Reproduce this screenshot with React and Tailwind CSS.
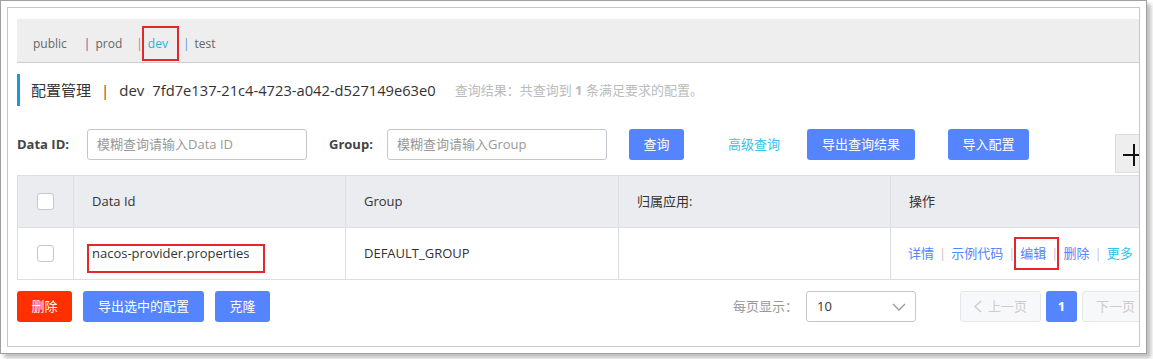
import React from 'react'

const tabs = [
    { name: "public", mr: "mr-[17px]" },
    { name: "prod", pipe: "text-[#8b3a8b]", mr: "mr-[14px]" },
    { name: "dev", pipe: "text-[#b58a4a]", active: true, mr: "mr-[15px]" },
    { name: "test", pipe: "text-[#5b9bd5]", mr: "" },
]

const Checkbox = () => (
    <div className="w-[17px] h-[17px] rounded-[3px] border border-[#c4c6cf] bg-white" />
)

const Sep = () => <span className="mx-[5px] text-[#c4c6cf]">|</span>

const App = () => {
    return (
        <div className="w-[1153px] h-[359px] bg-white font-['Open_Sans','Noto_Sans_CJK_SC',sans-serif] text-[#333]">
            <div className="w-[1147px] h-[354px] border border-[#a0a0a0] p-[6px] bg-white shadow-[4px_4px_4px_rgba(0,0,0,0.25)]">
                <div className="relative h-full border border-[#c8c8c8] overflow-hidden">
                    <div className="w-[1146px] ml-[9px]">
                        {/* namespace tabs */}
                        <div className="mt-[11px] h-[44px] bg-[#eeeeee] border-b border-[#cccccc] flex items-center pt-[6px] pl-[16px] text-[12px] text-[#666]">
                            {tabs.map((t) => (
                                <div key={t.name} className="flex items-center">
                                    {t.pipe && <span className={`mr-[5px] ${t.pipe}`}>|</span>}
                                    <span className={`relative ${t.mr} ${t.active ? "text-[#1bb5e0]" : ""}`}>
                                        {t.name}
                                        {t.active && (
                                            <span className="absolute -left-[6px] -right-[11px] -top-[9px] -bottom-[8px] border-2 border-[#e5262b]" />
                                        )}
                                    </span>
                                </div>
                            ))}
                        </div>

                        {/* title */}
                        <div className="mt-[11px] h-[32px] flex items-center border-l-[3px] border-[#1a9ad6] pl-[11px] pt-[1px]">
                            <span className="text-[15px]">配置管理</span>
                            <span className="mx-[10px] text-[15px] text-[#a52a2a]">|</span>
                            <span className="text-[15px]">dev</span>
                            <span className="ml-[8px] text-[14.7px]">7fd7e137-21c4-4723-a042-d527149e63e0</span>
                            <span className="ml-[19px] text-[13px] text-[#bbbbbb]">
                                查询结果：共查询到 <b>1</b> 条满足要求的配置。
                            </span>
                        </div>

                        {/* search */}
                        <div className="mt-[23px] h-[31px] flex items-center text-[13px]">
                            <span className="font-bold text-[#444] w-[70px]">Data ID:</span>
                            <div className="w-[220px] h-[31px] border border-[#c4c6cf] rounded-[3px] flex items-center pl-[9px] text-[#999]">
                                模糊查询请输入Data ID
                            </div>
                            <span className="ml-[22px] font-bold text-[#444] w-[58px]">Group:</span>
                            <div className="w-[220px] h-[31px] border border-[#c4c6cf] rounded-[3px] flex items-center pl-[9px] text-[#999]">
                                模糊查询请输入Group
                            </div>
                            <button className="ml-[22px] w-[55px] h-[31px] rounded-[3px] bg-[#5584ff] text-white">查询</button>
                            <span className="ml-[44px] text-[#33c3e6]">高级查询</span>
                            <button className="ml-[27px] w-[108px] h-[31px] rounded-[3px] bg-[#5584ff] text-white">导出查询结果</button>
                            <button className="ml-[33px] w-[81px] h-[31px] rounded-[3px] bg-[#5584ff] text-white">导入配置</button>
                        </div>

                        {/* table */}
                        <div className="mt-[15px] border-l border-t border-[#dcdee3] text-[13px]">
                            <div className="grid grid-cols-[56px_272px_273px_272px_273px] h-[52px] bg-[#ebecf0] border-b border-[#dcdee3]">
                                <div className="flex items-center justify-center border-r border-[#dcdee3]"><Checkbox /></div>
                                <div className="flex items-center pl-[18px] border-r border-[#dcdee3]">Data Id</div>
                                <div className="flex items-center pl-[18px] border-r border-[#dcdee3]">Group</div>
                                <div className="flex items-center pl-[18px] border-r border-[#dcdee3]">归属应用:</div>
                                <div className="flex items-center pl-[18px]">操作</div>
                            </div>
                            <div className="grid grid-cols-[56px_272px_273px_272px_273px] h-[52px] bg-white border-b border-[#dcdee3]">
                                <div className="flex items-center justify-center border-r border-[#dcdee3]"><Checkbox /></div>
                                <div className="relative flex items-center pl-[18px] border-r border-[#dcdee3]">
                                    nacos-provider.properties
                                    <span className="absolute left-[13px] top-[16px] w-[178px] h-[29px] border-2 border-[#e5262b]" />
                                </div>
                                <div className="flex items-center pl-[18px] border-r border-[#dcdee3]">DEFAULT_GROUP</div>
                                <div className="border-r border-[#dcdee3]" />
                                <div className="flex items-center pl-[17px] text-[#5584ff]">
                                    <span>详情</span>
                                    <Sep />
                                    <span>示例代码</span>
                                    <Sep />
                                    <span className="relative">
                                        编辑
                                        <span className="absolute -left-[6px] -right-[13px] -top-[7px] -bottom-[7px] border-2 border-[#e5262b]" />
                                    </span>
                                    <Sep />
                                    <span>删除</span>
                                    <Sep />
                                    <span className="text-[#33c3e6]">更多</span>
                                </div>
                            </div>
                        </div>

                        {/* footer */}
                        <div className="mt-[11px] h-[31px] flex items-center text-[13px]">
                            <button className="w-[55px] h-[31px] rounded-[3px] bg-[#ff3000] text-white">删除</button>
                            <button className="ml-[11px] w-[121px] h-[31px] rounded-[3px] bg-[#5584ff] text-white">导出选中的配置</button>
                            <button className="ml-[11px] w-[55px] h-[31px] rounded-[3px] bg-[#5584ff] text-white">克隆</button>
                            <div className="ml-auto flex items-center">
                                <span className="text-[#999]">每页显示：</span>
                                <div className="ml-[8px] w-[110px] h-[31px] border border-[#c4c6cf] rounded-[3px] flex items-center justify-between pl-[10px] pr-[9px]">
                                    <span>10</span>
                                    <svg width="14" height="8" viewBox="0 0 14 8" fill="none" stroke="#999" strokeWidth="1.3">
                                        <polyline points="1,1 7,7 13,1" />
                                    </svg>
                                </div>
                                <div className="ml-[44px] w-[81px] h-[31px] border border-[#e6e7eb] bg-[#f7f8fa] rounded-[3px] flex items-center justify-center gap-[6px] text-[#cccccc]">
                                    <svg width="8" height="13" viewBox="0 0 8 13" fill="none" stroke="#cccccc" strokeWidth="1.5">
                                        <polyline points="7,1 1,6.5 7,12" />
                                    </svg>
                                    <span>上一页</span>
                                </div>
                                <div className="ml-[5px] w-[31px] h-[31px] rounded-[3px] bg-[#5584ff] text-white font-bold flex items-center justify-center">1</div>
                                <div className="ml-[5px] w-[81px] h-[31px] border border-[#e6e7eb] bg-[#f7f8fa] rounded-[3px] flex items-center justify-center gap-[6px] text-[#cccccc]">
                                    <span>下一页</span>
                                    <svg width="8" height="13" viewBox="0 0 8 13" fill="none" stroke="#cccccc" strokeWidth="1.5">
                                        <polyline points="1,1 7,6.5 1,12" />
                                    </svg>
                                </div>
                            </div>
                        </div>
                    </div>

                    {/* floating add button */}
                    <div className="absolute left-[1107px] top-[126px] w-[40px] h-[39px] bg-[#eeeeee] border border-[#dddddd]">
                        <svg className="absolute left-[6px] top-[8px]" width="24" height="24" viewBox="0 0 24 24" stroke="#111" strokeWidth="2">
                            <line x1="1" y1="12" x2="24" y2="12" />
                            <line x1="12" y1="1" x2="12" y2="23" />
                        </svg>
                    </div>
                </div>
            </div>
        </div>
    )
}

export default App
